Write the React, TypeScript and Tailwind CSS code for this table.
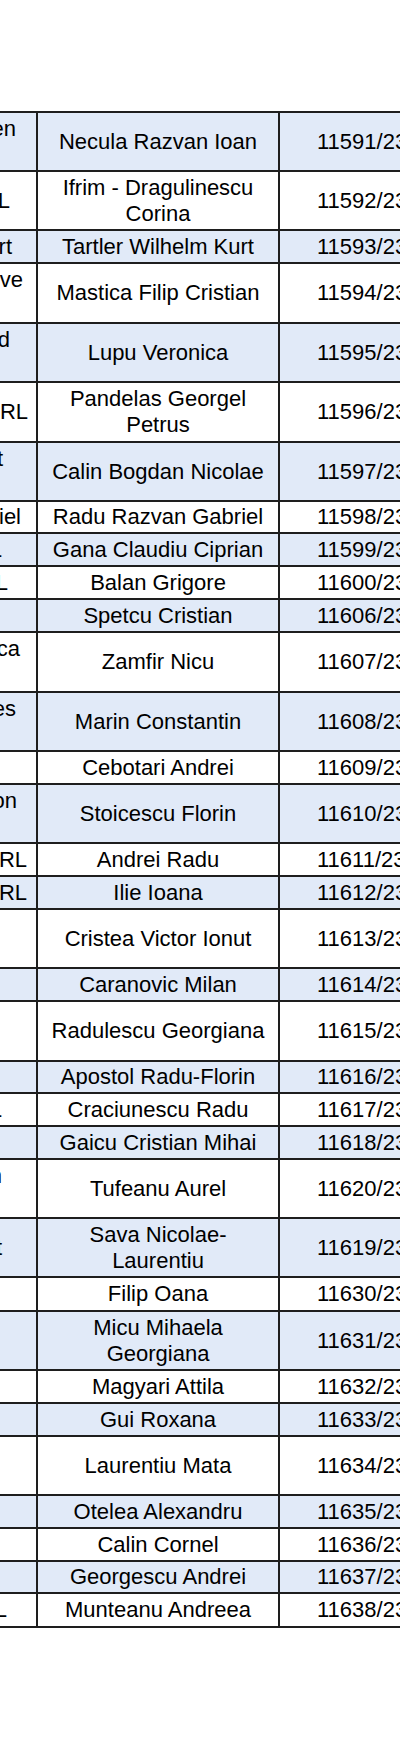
type Row = {
  name: string;
  num: string;
  h: string;
  lead?: { text: string; pr: string; top?: boolean };
};

const rows: Row[] = [
  { name: "Necula Razvan Ioan", num: "11591/23", h: "h-[59px]", lead: { text: "Green", pr: "pr-[20px]", top: true } },
  { name: "Ifrim - Dragulinescu Corina", num: "11592/23", h: "h-[59px]", lead: { text: "SRL", pr: "pr-[26px]" } },
  { name: "Tartler Wilhelm Kurt", num: "11593/23", h: "h-[33px]", lead: { text: "Kurt", pr: "pr-[24px]" } },
  { name: "Mastica Filip Cristian", num: "11594/23", h: "h-[60px]", lead: { text: "Creative", pr: "pr-[13px]", top: true } },
  { name: "Lupu Veronica", num: "11595/23", h: "h-[59px]", lead: { text: "Grand", pr: "pr-[26px]", top: true } },
  { name: "Pandelas Georgel Petrus", num: "11596/23", h: "h-[60px]", lead: { text: "SRL", pr: "pr-[8px]" } },
  { name: "Calin Bogdan Nicolae", num: "11597/23", h: "h-[59px]", lead: { text: "Consult", pr: "pr-[33px]", top: true } },
  { name: "Radu Razvan Gabriel", num: "11598/23", h: "h-[32px]", lead: { text: "Gabriel", pr: "pr-[15px]" } },
  { name: "Gana Claudiu Ciprian", num: "11599/23", h: "h-[33px]", lead: { text: "SRL", pr: "pr-[34px]" } },
  { name: "Balan Grigore", num: "11600/23", h: "h-[33px]", lead: { text: "SRL", pr: "pr-[28px]" } },
  { name: "Spetcu Cristian", num: "11606/23", h: "h-[33px]" },
  { name: "Zamfir Nicu", num: "11607/23", h: "h-[60px]", lead: { text: "Tehnica", pr: "pr-[16px]", top: true } },
  { name: "Marin Constantin", num: "11608/23", h: "h-[59px]", lead: { text: "Services", pr: "pr-[20px]", top: true } },
  { name: "Cebotari Andrei", num: "11609/23", h: "h-[33px]" },
  { name: "Stoicescu Florin", num: "11610/23", h: "h-[59px]", lead: { text: "Construction", pr: "pr-[19px]", top: true } },
  { name: "Andrei Radu", num: "11611/23", h: "h-[33px]", lead: { text: "SRL", pr: "pr-[9px]" } },
  { name: "Ilie Ioana", num: "11612/23", h: "h-[33px]", lead: { text: "SRL", pr: "pr-[9px]" } },
  { name: "Cristea Victor Ionut", num: "11613/23", h: "h-[59px]" },
  { name: "Caranovic Milan", num: "11614/23", h: "h-[33px]" },
  { name: "Radulescu Georgiana", num: "11615/23", h: "h-[60px]" },
  { name: "Apostol Radu-Florin", num: "11616/23", h: "h-[32px]" },
  { name: "Craciunescu Radu", num: "11617/23", h: "h-[33px]", lead: { text: "SRL", pr: "pr-[34px]" } },
  { name: "Gaicu Cristian Mihai", num: "11618/23", h: "h-[33px]" },
  { name: "Tufeanu Aurel", num: "11620/23", h: "h-[59px]", lead: { text: "Design", pr: "pr-[34px]", top: true } },
  { name: "Sava Nicolae-Laurentiu", num: "11619/23", h: "h-[59px]", lead: { text: "Consult", pr: "pr-[34px]" } },
  { name: "Filip Oana", num: "11630/23", h: "h-[34px]" },
  { name: "Micu Mihaela Georgiana", num: "11631/23", h: "h-[59px]" },
  { name: "Magyari Attila", num: "11632/23", h: "h-[33px]" },
  { name: "Gui Roxana", num: "11633/23", h: "h-[33px]" },
  { name: "Laurentiu Mata", num: "11634/23", h: "h-[59px]" },
  { name: "Otelea Alexandru", num: "11635/23", h: "h-[33px]" },
  { name: "Calin Cornel", num: "11636/23", h: "h-[33px]" },
  { name: "Georgescu Andrei", num: "11637/23", h: "h-[32px]" },
  { name: "Munteanu Andreea", num: "11638/23", h: "h-[34px]", lead: { text: "SRL", pr: "pr-[29px]" } },
];

function LeadCell({ lead }: { lead?: Row["lead"] }) {
  return (
    <div className="flex w-[38px] shrink-0 items-center justify-end overflow-hidden border-r-2 border-[#1e1e1e]">
      {lead ? (
        <div className={`flex shrink-0 justify-end whitespace-nowrap leading-[26px] ${lead.pr} ${lead.top ? "h-[52px] items-start" : "items-center"}`}>
          {lead.text}
        </div>
      ) : null}
    </div>
  );
}

export default function App() {
  return (
    <div className="h-[1755px] w-[400px] overflow-hidden bg-white pt-[111px] font-['Liberation_Sans',Arial,sans-serif] text-[22px] text-black">
      <div className="border-t-2 border-[#1e1e1e]">
        {rows.map((r, i) => (
          <div
            key={r.num}
            className={`flex border-b-2 border-[#1e1e1e] ${r.h} ${i % 2 === 0 ? "bg-[#e1eaf8]" : "bg-white"}`}
          >
            <LeadCell lead={r.lead} />
            <div className="flex w-[242px] shrink-0 items-center justify-center border-r-2 border-[#1e1e1e] px-2 text-center leading-[26px]">
              {r.name}
            </div>
            <div className="flex flex-1 items-center whitespace-nowrap pl-[37px] leading-[26px]">{r.num}</div>
          </div>
        ))}
      </div>
    </div>
  );
}
